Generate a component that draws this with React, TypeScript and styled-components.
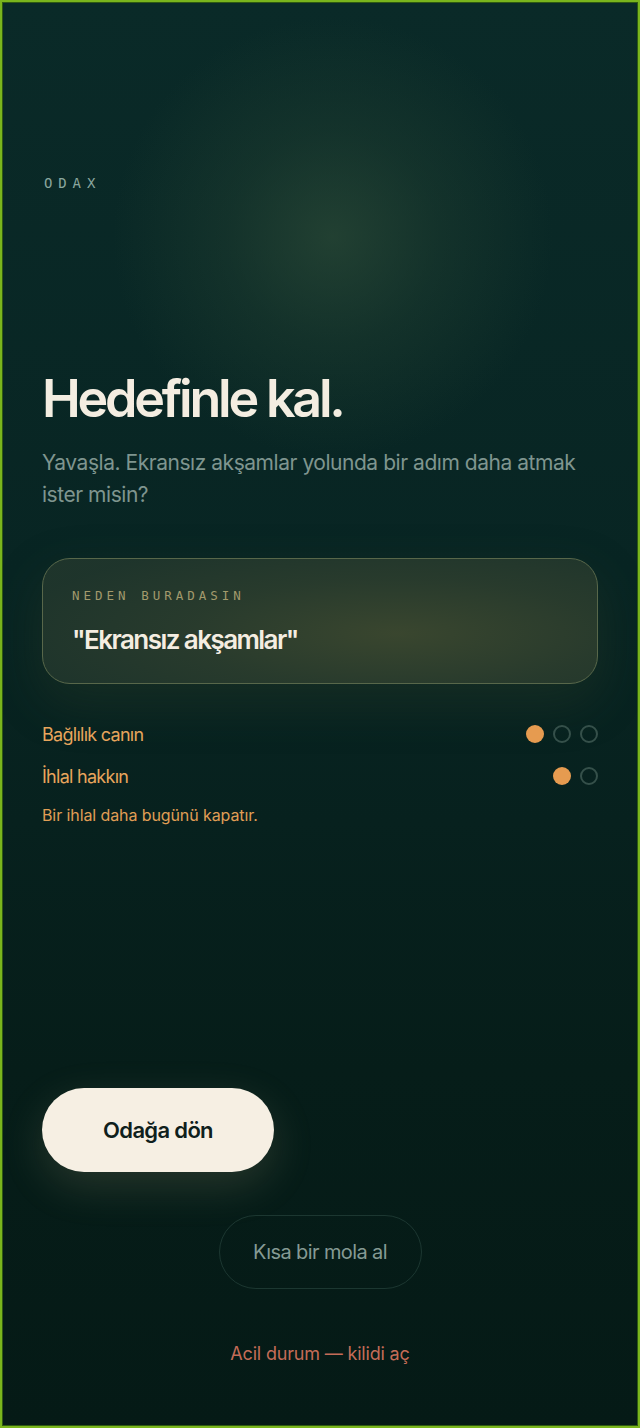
import React from "react";
import styled, { createGlobalStyle } from "styled-components";

const Global = createGlobalStyle`
  html, body { margin: 0; padding: 0; background: #051a16; }
  * { box-sizing: border-box; }
`;

const Page = styled.div`
  min-height: 100vh;
  border: 2px solid #7ab51d;
  box-shadow: inset 0 0 0 1px #2f5a12;
  padding: 171px 40px 60px;
  display: flex;
  flex-direction: column;
  font-family: Inter, "Noto Sans", sans-serif;
  background:
    radial-gradient(circle at 52% 16.5%, rgba(50, 80, 58, 0.6) 0, rgba(40, 70, 52, 0.34) 105px, rgba(20, 50, 40, 0) 220px),
    linear-gradient(180deg, #0a2a28 0%, #082523 40%, #061d19 75%, #051a16 100%);
`;

const Brand = styled.div`
  font-family: "DejaVu Sans Mono", "Liberation Mono", monospace;
  font-size: 14px;
  line-height: 20px;
  letter-spacing: 0.42em;
  color: #8aa69e;
  padding-left: 2px;
`;

const Title = styled.h1`
  margin: 176px 0 0;
  font-size: 52px;
  line-height: 60px;
  font-weight: 600;
  letter-spacing: -0.062em;
  color: #f4ede1;
`;

const Lead = styled.p`
  margin: 18px 0 0;
  font-size: 21px;
  line-height: 32px;
  font-weight: 400;
  letter-spacing: -0.022em;
  color: #7f958f;
`;

const ReasonCard = styled.section`
  margin-top: 47px;
  border: 1px solid #58674a;
  border-radius: 28px;
  padding: 29px 29px 27px;
  display: flex;
  flex-direction: column;
  gap: 20px;
  background:
    radial-gradient(ellipse 70% 80% at 64% 60%, rgba(70, 78, 48, 0.7) 0%, rgba(52, 66, 46, 0.5) 55%, rgba(36, 56, 44, 0.3) 100%),
    #1c332b;
  box-shadow: 0 18px 50px rgba(60, 72, 44, 0.28);
`;

const CardLabel = styled.div`
  font-family: "DejaVu Sans Mono", "Liberation Mono", monospace;
  font-size: 12.5px;
  line-height: 16px;
  letter-spacing: 0.32em;
  color: #a39a6c;
`;

const Quote = styled.div`
  font-size: 26px;
  line-height: 32px;
  font-weight: 600;
  letter-spacing: -0.06em;
  color: #f4ede1;
`;

const StatRow = styled.div<{ $first?: boolean }>`
  margin-top: ${(p) => (p.$first ? "36px" : "14px")};
  height: 28px;
  display: flex;
  align-items: center;
  justify-content: space-between;
`;

const StatLabel = styled.span`
  font-size: 18px;
  letter-spacing: -0.04em;
  color: #e7a55c;
`;

const Dots = styled.div`
  display: flex;
  gap: 9px;
`;

const Dot = styled.span<{ $on: boolean }>`
  width: 18px;
  height: 18px;
  border-radius: 50%;
  background: ${(p) => (p.$on ? "#e69b50" : "transparent")};
  border: ${(p) => (p.$on ? "none" : "2px solid #35504a")};
`;

const Warning = styled.p`
  margin: 13px 0 0;
  font-size: 16px;
  line-height: 24px;
  letter-spacing: -0.006em;
  color: #e09e55;
`;

const Actions = styled.div`
  margin-top: auto;
  display: flex;
  flex-direction: column;
  align-items: center;
`;

const PrimaryButton = styled.button`
  align-self: flex-start;
  width: 232px;
  height: 84px;
  border: none;
  border-radius: 42px;
  background: #f6efe3;
  color: #0f201c;
  font-family: Inter, "Noto Sans", sans-serif;
  font-size: 22px;
  font-weight: 600;
  letter-spacing: -0.03em;
  box-shadow: 0 14px 44px rgba(214, 190, 140, 0.16);
  cursor: pointer;
`;

const SecondaryButton = styled.button`
  margin-top: 43px;
  width: 203px;
  height: 74px;
  border: 1px solid #1c3731;
  border-radius: 37px;
  background: transparent;
  color: #859a94;
  font-family: Inter, "Noto Sans", sans-serif;
  font-size: 20px;
  font-weight: 400;
  letter-spacing: -0.03em;
  cursor: pointer;
`;

const EmergencyLink = styled.a`
  margin-top: 53px;
  font-size: 18px;
  line-height: 24px;
  letter-spacing: -0.01em;
  color: #c46c58;
  text-decoration: none;
  cursor: pointer;
`;

function DotGroup({ on, total }: { on: number; total: number }) {
  return (
    <Dots>
      {Array.from({ length: total }).map((_, i) => (
        <Dot key={i} $on={i < on} />
      ))}
    </Dots>
  );
}

export default function App() {
  return (
    <>
      <Global />
      <Page>
        <Brand>ODAX</Brand>
        <Title>Hedefinle kal.</Title>
        <Lead>Yavaşla. Ekransız akşamlar yolunda bir adım daha atmak ister misin?</Lead>
        <ReasonCard>
          <CardLabel>NEDEN BURADASIN</CardLabel>
          <Quote>"Ekransız akşamlar"</Quote>
        </ReasonCard>
        <StatRow $first>
          <StatLabel>Bağlılık canın</StatLabel>
          <DotGroup on={1} total={3} />
        </StatRow>
        <StatRow>
          <StatLabel>İhlal hakkın</StatLabel>
          <DotGroup on={1} total={2} />
        </StatRow>
        <Warning>Bir ihlal daha bugünü kapatır.</Warning>
        <Actions>
          <PrimaryButton>Odağa dön</PrimaryButton>
          <SecondaryButton>Kısa bir mola al</SecondaryButton>
          <EmergencyLink>Acil durum — kilidi aç</EmergencyLink>
        </Actions>
      </Page>
    </>
  );
}
